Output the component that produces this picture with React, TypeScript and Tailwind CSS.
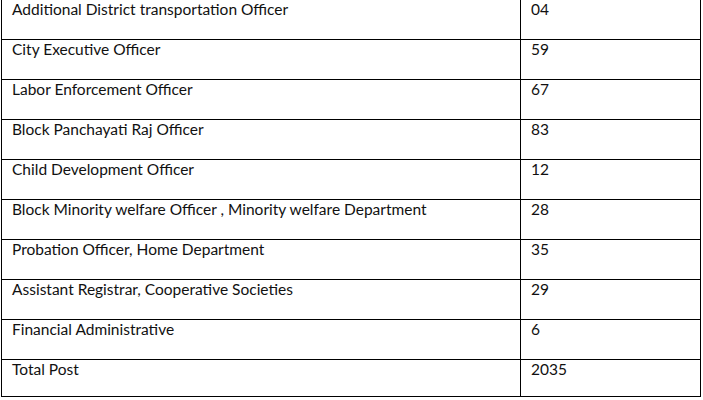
import React from "react";

const rows: [string, string][] = [
  ["Additional District transportation Officer", "04"],
  ["City Executive Officer", "59"],
  ["Labor Enforcement Officer", "67"],
  ["Block Panchayati Raj Officer", "83"],
  ["Child Development Officer", "12"],
  ["Block Minority welfare Officer , Minority welfare Department", "28"],
  ["Probation Officer, Home Department", "35"],
  ["Assistant Registrar, Cooperative Societies", "29"],
  ["Financial Administrative", "6"],
  ["Total Post", "2035"],
];

export default function App() {
  return (
    <div className="w-[703px] h-[400px] bg-white overflow-hidden">
      <div
        className="-mt-px ml-px w-[700px] border-l border-r border-black text-[15.5px] text-[#111]"
        style={{ fontFamily: "Lato, 'Open Sans', sans-serif" }}
      >
        {rows.map(([name, val], i) => (
          <div
            key={i}
            className={`flex border-t border-black ${i === rows.length - 1 ? "h-[38px] border-b" : "h-[40px]"}`}
          >
            <div className="w-[518px] pl-[10px] pt-0 leading-[18px]">{name}</div>
            <div className="flex-1 border-l border-black pl-[10px] pt-0 leading-[18px]">{val}</div>
          </div>
        ))}
      </div>
    </div>
  );
}
